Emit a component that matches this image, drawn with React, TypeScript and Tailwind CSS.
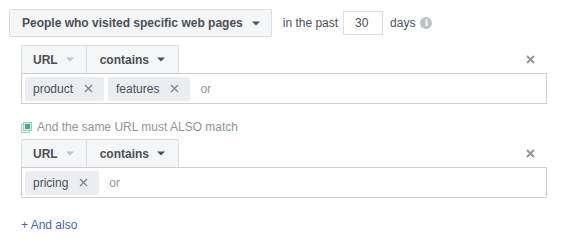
function Caret({ light }: { light?: boolean }) {
  return (
    <svg width="8" height="5" viewBox="0 0 8 5" className="shrink-0">
      <path d="M0 0.5h8L4 4.5z" fill={light ? "#bec2c9" : "#4b4f56"} />
    </svg>
  );
}

function TagX() {
  return (
    <svg width="9" height="9" viewBox="0 0 9 9" className="shrink-0">
      <path d="M1 1l7 7M8 1L1 8" stroke="#7f838a" strokeWidth="1.3" />
    </svg>
  );
}

function CloseX() {
  return (
    <svg width="9" height="9" viewBox="0 0 9 9" className="shrink-0">
      <path d="M1 1l7 7M8 1L1 8" stroke="#90949c" strokeWidth="1.8" />
    </svg>
  );
}

function Tag({ label }: { label: string }) {
  return (
    <div className="h-[24px] bg-[#ebedf0] rounded-[2px] pl-[8px] pr-[11px] flex items-center gap-[11px]">
      <span>{label}</span>
      <TagX />
    </div>
  );
}

function Condition({ tags }: { tags: string[] }) {
  return (
    <div className="ml-[12px] w-[526px]">
      <div className="flex items-center justify-between">
        <div className="flex h-[28px] border-x border-t border-[#dddfe2] bg-[#f5f6f7] font-bold">
          <div className="flex items-center gap-[8px] pl-[11px] pr-[12px] border-r border-[#dddfe2]">
            <span>URL</span>
            <Caret light />
          </div>
          <div className="flex items-center gap-[8px] pl-[13px] pr-[13px]">
            <span>contains</span>
            <Caret />
          </div>
        </div>
        <div className="mr-[12px]">
          <CloseX />
        </div>
      </div>
      <div className="h-[31px] border border-[#ccd0d5] flex items-center px-[3px] gap-[4px]">
        {tags.map((t) => (
          <Tag key={t} label={t} />
        ))}
        <span className="ml-[6px] text-[#90949c]">or</span>
      </div>
    </div>
  );
}

export default function App() {
  return (
    <div className="w-[563px] h-[245px] bg-white pt-[9px] pl-[9px] text-[12px] text-[#4b4f56] font-['Liberation_Sans',Arial,sans-serif]">
      <div className="flex items-center h-[28px]">
        <div className="h-[28px] border border-[#dddfe2] bg-[#f5f6f7] rounded-[2px] pl-[12px] pr-[11px] flex items-center gap-[9px] font-bold">
          <span>People who visited specific web pages</span>
          <Caret />
        </div>
        <span className="ml-[11px]">in the past</span>
        <div className="ml-[5px] w-[40px] h-[24px] border border-[#dddfe2] pl-[11px] flex items-center">30</div>
        <span className="ml-[7px]">days</span>
        <div className="ml-[5px] w-[12px] h-[12px] rounded-full bg-[#bec2c9] flex items-center justify-center text-white text-[9px] font-bold font-['DejaVu_Serif',serif] leading-none">
          i
        </div>
      </div>

      <div className="mt-[8px]">
        <Condition tags={["product", "features"]} />
      </div>

      <div className="ml-[12px] mt-[15px] h-[16px] flex items-center gap-[5px] text-[#90949c]">
        <svg width="11" height="11" viewBox="0 0 11 11" className="shrink-0">
          <rect x="0.5" y="2.5" width="8" height="8" fill="white" stroke="#bec2c9" />
          <rect x="2.5" y="0.5" width="8" height="8" fill="#cfe9e3" stroke="#9fcfc3" />
          <rect x="4" y="2" width="5" height="5" fill="#3fae94" />
        </svg>
        <span>And the same URL must ALSO match</span>
      </div>

      <div className="mt-[4px]">
        <Condition tags={["pricing"]} />
      </div>

      <div className="ml-[12px] mt-[19px] h-[16px] flex items-center text-[#4267b2]">+ And also</div>
    </div>
  );
}
